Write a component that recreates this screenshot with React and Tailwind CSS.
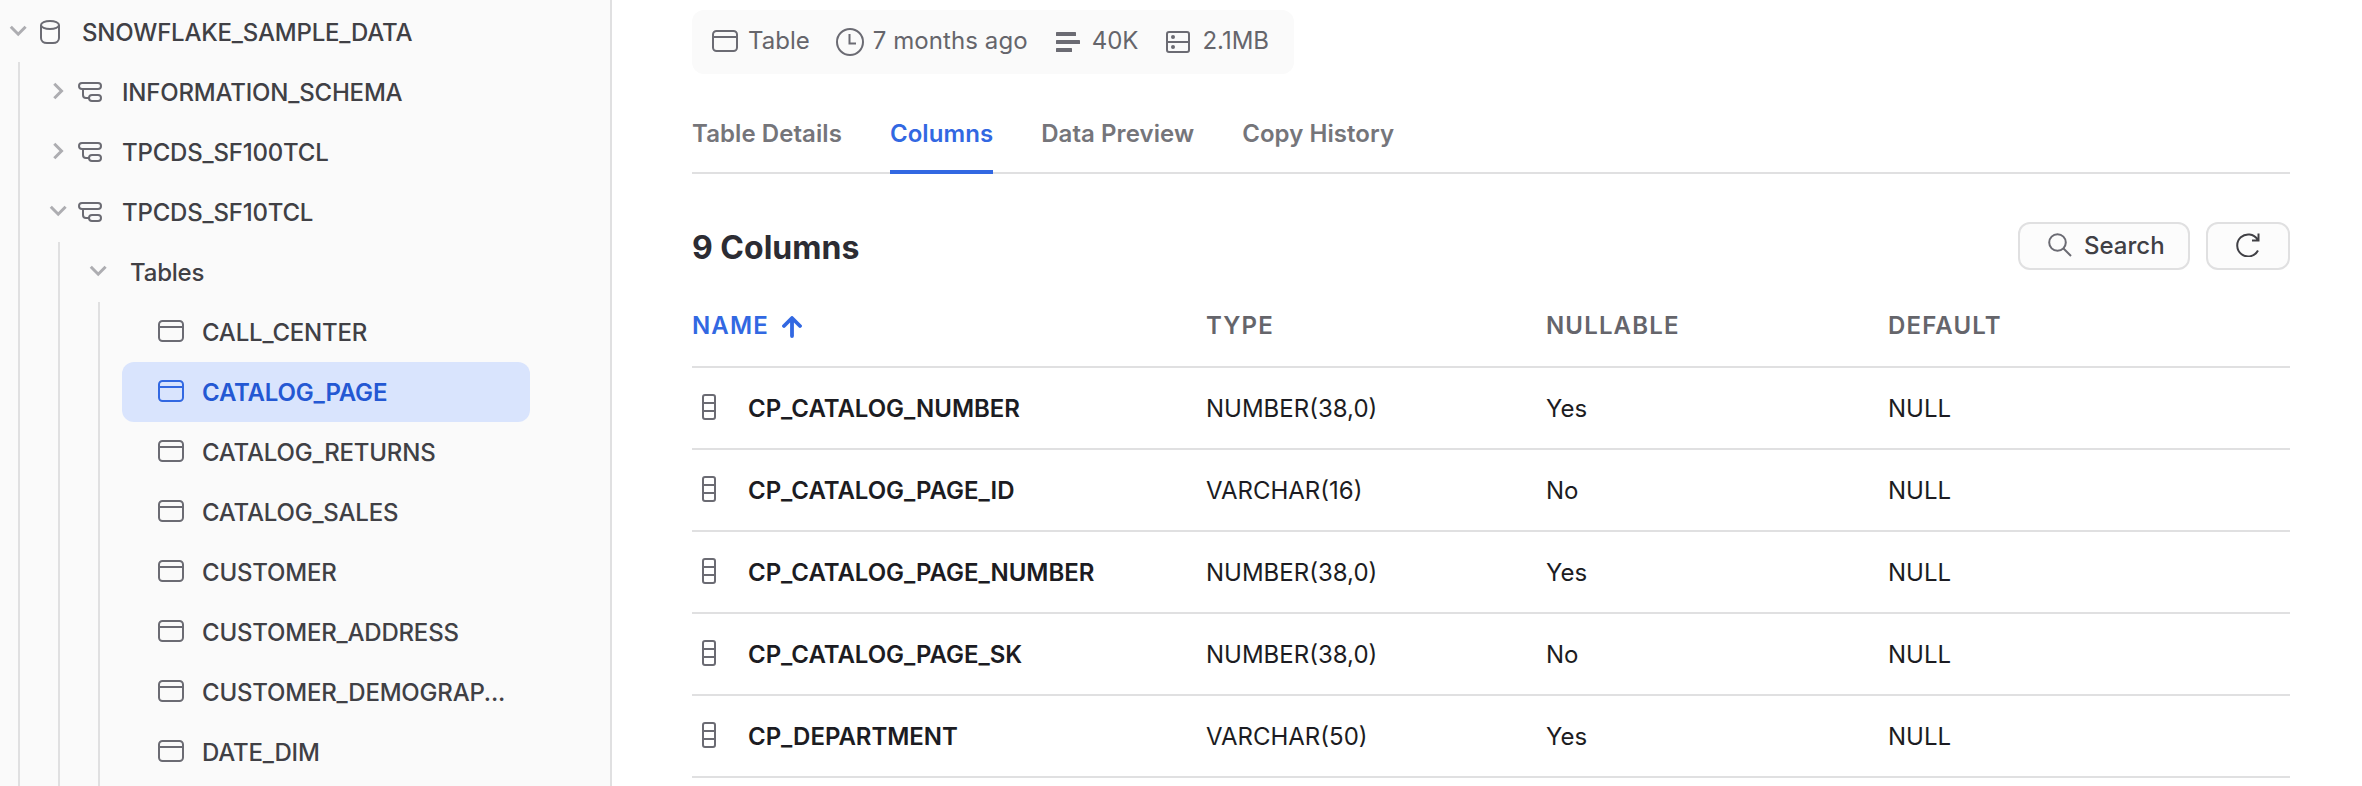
const DbIcon = () => (
  <svg className="w-5 h-6 shrink-0" viewBox="0 0 20 24" fill="none" stroke="#6b6b73" strokeWidth="2">
    <ellipse cx="10" cy="5" rx="9" ry="4" />
    <path d="M1 5v13c0 3 2.500 5 6 5h6c3.500 0 6-2 6-5V5" />
  </svg>
);
const SchemaIcon = () => (
  <svg className="w-6 h-5 shrink-0" viewBox="0 0 24 20" fill="none" stroke="#6b6b73" strokeWidth="2">
    <rect x="1" y="1" width="22" height="6" rx="3" />
    <path d="M5 7v6q0 3 3 3h3" />
    <rect x="11" y="13" width="12" height="6" rx="3" />
  </svg>
);
const TableIcon = ({ className = "text-[#6b6b73]" }) => (
  <svg className={"mb-0.5 w-[26px] h-[22px] shrink-0 " + className} viewBox="0 0 26 22" fill="none" stroke="currentColor" strokeWidth="2">
    <rect x="1" y="1" width="24" height="20" rx="3.500" />
    <path d="M1 7h24" />
  </svg>
);
const Chevron = ({ open }) => (
  <svg className="mb-0.5 w-5 h-5 shrink-0" viewBox="0 0 20 20" fill="none" stroke="#adadb1" strokeWidth="3">
    <path d={open ? "M2.800 5.700l7.400 7.500 7.400-7.500" : "M6.300 2.800l7.200 7.200-7.200 7.200"} />
  </svg>
);
const ColumnIcon = () => (
  <svg className="mb-1 w-[14px] h-[26px] shrink-0" viewBox="0 0 14 26" fill="none" stroke="#6b6b73" strokeWidth="2">
    <rect x="1" y="1" width="12" height="24" rx="2" />
    <path d="M1 9h12M1 17h12" />
  </svg>
);

const schemas = [
  { name: "INFORMATION_SCHEMA", open: false },
  { name: "TPCDS_SF100TCL", open: false },
  { name: "TPCDS_SF10TCL", open: true },
];
const tables = ["CALL_CENTER", "CATALOG_PAGE", "CATALOG_RETURNS", "CATALOG_SALES", "CUSTOMER", "CUSTOMER_ADDRESS", "CUSTOMER_DEMOGRAP...", "DATE_DIM"];
const columns = [
  ["CP_CATALOG_NUMBER", "NUMBER(38,0)", "Yes"],
  ["CP_CATALOG_PAGE_ID", "VARCHAR(16)", "No"],
  ["CP_CATALOG_PAGE_NUMBER", "NUMBER(38,0)", "Yes"],
  ["CP_CATALOG_PAGE_SK", "NUMBER(38,0)", "No"],
  ["CP_DEPARTMENT", "VARCHAR(50)", "Yes"],
];
const tabs = ["Table Details", "Columns", "Data Preview", "Copy History"];

function Sidebar() {
  return (
    <aside className="w-[612px] h-full shrink-0 overflow-hidden border-r-2 border-[#e0e0e1] bg-[#fafafa] pt-0.5 text-2xl font-medium tracking-[-0.2px] text-[#404045]">
      <div className="flex h-[60px] items-center pl-2">
        <Chevron open />
        <div className="ml-3 flex"><DbIcon /></div>
        <span className="ml-[22px] pt-0.5">SNOWFLAKE_SAMPLE_DATA</span>
      </div>
      <div className="ml-[18px] h-full border-l-2 border-[#e0e0e1]">
        {schemas.map((s) => (
          <div key={s.name} className="flex h-[60px] items-center pl-7">
            <Chevron open={s.open} />
            <div className="ml-2.5 flex"><SchemaIcon /></div>
            <span className="ml-5 pt-0.5">{s.name}</span>
          </div>
        ))}
        <div className="ml-[38px] h-full border-l-2 border-[#e0e0e1]">
          <div className="flex h-[60px] items-center pl-7">
            <Chevron open />
            <span className="ml-[22px] pt-0.5">Tables</span>
          </div>
          <div className="ml-[38px] h-full border-l-2 border-[#e0e0e1] pl-[22px]">
            {tables.map((t) => {
              const active = t === "CATALOG_PAGE";
              return (
                <div key={t} className={"flex h-[60px] w-[408px] items-center rounded-xl pl-9 " + (active ? "bg-[#d9e4fd] font-semibold text-[#2458d3]" : "")}>
                  <TableIcon className={active ? "text-[#3268e2]" : "text-[#6b6b73]"} />
                  <span className="ml-[18px] whitespace-nowrap pt-0.5">{t}</span>
                </div>
              );
            })}
          </div>
        </div>
      </div>
    </aside>
  );
}

export default function App() {
  return (
    <div className="flex h-[786px] w-[2362px] overflow-hidden bg-white font-['Inter',sans-serif]">
      <Sidebar />
      <main className="w-[1678px] pl-20 pt-2.5">
        <div className="flex h-16 w-[602px] items-center rounded-xl bg-[#fafafa] pl-5 text-2xl text-[#65656b]">
          <TableIcon />
          <span className="ml-2.5 pb-0.5">Table</span>
          <svg className="ml-[25px] size-[30px]" viewBox="0 0 30 30" fill="none" stroke="#6b6b73" strokeWidth="2">
            <circle cx="15" cy="15" r="13" /><path d="M14.500 7v9.500H21" />
          </svg>
          <span className="ml-2 pb-0.5 tracking-[0.08px]">7 months ago</span>
          <svg className="ml-7 h-5 w-6" viewBox="0 0 24 20" fill="#6b6b73">
            <rect width="20" height="4" rx=".6" /><rect y="8" width="24" height="4" rx=".6" /><rect y="16" width="16" height="4" rx=".6" />
          </svg>
          <span className="ml-3 pb-0.5">40K</span>
          <svg className="ml-7 h-[22px] w-6" viewBox="0 0 24 22" fill="none" stroke="#6b6b73" strokeWidth="2">
            <rect x="1" y="1" width="22" height="20" rx="2" /><path d="M1 11h22" />
            <circle cx="7" cy="6" r="1" /><circle cx="7" cy="16" r="1" />
          </svg>
          <span className="ml-3 pb-0.5">2.1MB</span>
        </div>
        <nav className="mt-7 flex h-[72px] gap-12 border-b-2 border-[#e0e0e1] text-2xl font-semibold tracking-[0.07px] text-[#75757a]">
          {tabs.map((t) => (
            <div key={t} className={"h-[72px] pt-4 " + (t === "Columns" ? "border-b-4 border-[#3268e2] text-[#3268e2]" : "")}>{t}</div>
          ))}
        </nav>
        <div className="mt-12 flex h-12 items-center">
          <h1 className="pt-[3px] text-[32px] font-bold text-[#2c2c33]">9 Columns</h1>
          <button className="ml-auto flex h-12 w-[172px] items-center rounded-xl border-2 border-[#e0e0e1] bg-[#fcfcfc] pl-7 text-2xl font-medium text-[#404045]">
            <svg className="mb-0.5 size-6" viewBox="0 0 24 24" fill="none" stroke="#6b6b73" strokeWidth="2"><circle cx="9.500" cy="9.500" r="8.300" /><path d="M15.500 15.500l7.500 7.500" /></svg>
            <span className="ml-3">Search</span>
          </button>
          <button className="ml-4 flex h-12 w-[84px] items-center justify-center rounded-xl border-2 border-[#e0e0e1] bg-[#fcfcfc]">
            <svg className="mb-0.5 size-6" viewBox="0 0 24 24" fill="none" stroke="#404045" strokeWidth="2"><path d="M22 17.500A11 11 0 1 1 21.500 6.500M22.500 .5v7H16" /></svg>
          </button>
        </div>
        <div className="grid h-[98px] grid-cols-[514px_340px_342px_1fr] items-center border-b-2 border-[#e0e0e1] pt-4 text-2xl font-semibold tracking-[1.15px] text-[#65656b]">
          <div className="flex items-center text-[#3268e2]">
            NAME
            <svg className="ml-[13px] mt-0.5 h-[22px] w-5" viewBox="0 0 20 22" fill="none" stroke="currentColor" strokeWidth="3.800" strokeLinecap="round" strokeLinejoin="round"><path d="M10 20V2.500M2 10l8-8 8 8" /></svg>
          </div>
          <div>TYPE</div><div>NULLABLE</div><div>DEFAULT</div>
        </div>
        {columns.map(([name, type, nullable]) => (
          <div key={name} className="grid h-[82px] grid-cols-[514px_340px_342px_1fr] items-center border-b-2 border-[#e0e0e1] pt-0.5 text-2xl text-[#1c1c22]">
            <div className="flex items-center pl-2.5 font-semibold tracking-[-0.04px]"><ColumnIcon /><span className="ml-8">{name}</span></div>
            <div>{type}</div><div>{nullable}</div><div>NULL</div>
          </div>
        ))}
      </main>
    </div>
  );
}
